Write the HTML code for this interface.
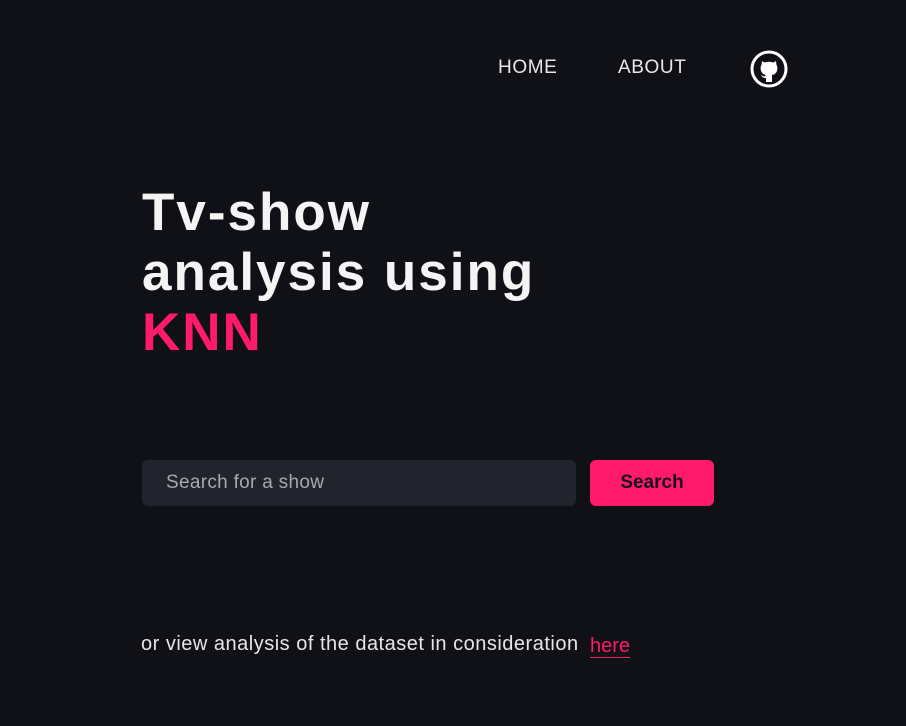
<!DOCTYPE html>
<html><head><style>
html,body{margin:0;padding:0;background:#101116;width:906px;height:726px;overflow:hidden;font-family:"Liberation Sans",sans-serif;color:#ececec}
.nav{position:absolute;top:57px;font-size:19px;color:#e8e8e8;letter-spacing:0.6px}
h1{position:absolute;left:142px;top:183px;margin:0;font-size:53px;line-height:60px;font-weight:bold;color:#f4f4f4;letter-spacing:2px}
h1 span{color:#ff1a6b}
.inp{position:absolute;left:142px;top:460px;width:434px;height:46px;background:#23232d;border-radius:6px}
.inp div{position:absolute;left:24px;top:12px;font-size:19px;color:#a8a8b0;letter-spacing:0.3px}
.btn{position:absolute;left:590px;top:460px;width:124px;height:46px;background:#ff1a6b;border-radius:6px;text-align:center;line-height:46px;font-size:19px;color:#1a1020;font-weight:bold}
.foot{position:absolute;left:141px;top:633px;font-size:20px;color:#e6e6e6;letter-spacing:0.5px}
.here{position:absolute;left:590px;top:635px;font-size:20px;color:#ff1a6b;border-bottom:1px solid #ff1a6b;line-height:22px}
</style></head><body>
<div class="nav" style="left:498px">HOME</div>
<div class="nav" style="left:618px">ABOUT</div>
<svg style="position:absolute;left:750px;top:50px" width="38" height="38" viewBox="0 0 38 38">
<circle cx="19" cy="19" r="17" fill="#101116" stroke="#fff" stroke-width="3"/>
<path fill="#fff" d="M12 11 L14.5 12.5 Q19 11 23.5 12.5 L26 11 L26.5 15 Q28 17 27 21 Q25.5 24.5 22 25 L22 32 L16 32 L16 28 Q12.5 28.5 11 25 Q13 26 14.5 26.5 L16 25 Q12.5 24.5 11 21 Q10 17 11.5 15 Z"/>
</svg>
<h1>Tv-show<br>analysis using<br><span>KNN</span></h1>
<div class="inp"><div>Search for a show</div></div>
<div class="btn">Search</div>
<div class="foot">or view analysis of the dataset in consideration</div>
<div class="here">here</div>
</body></html>
